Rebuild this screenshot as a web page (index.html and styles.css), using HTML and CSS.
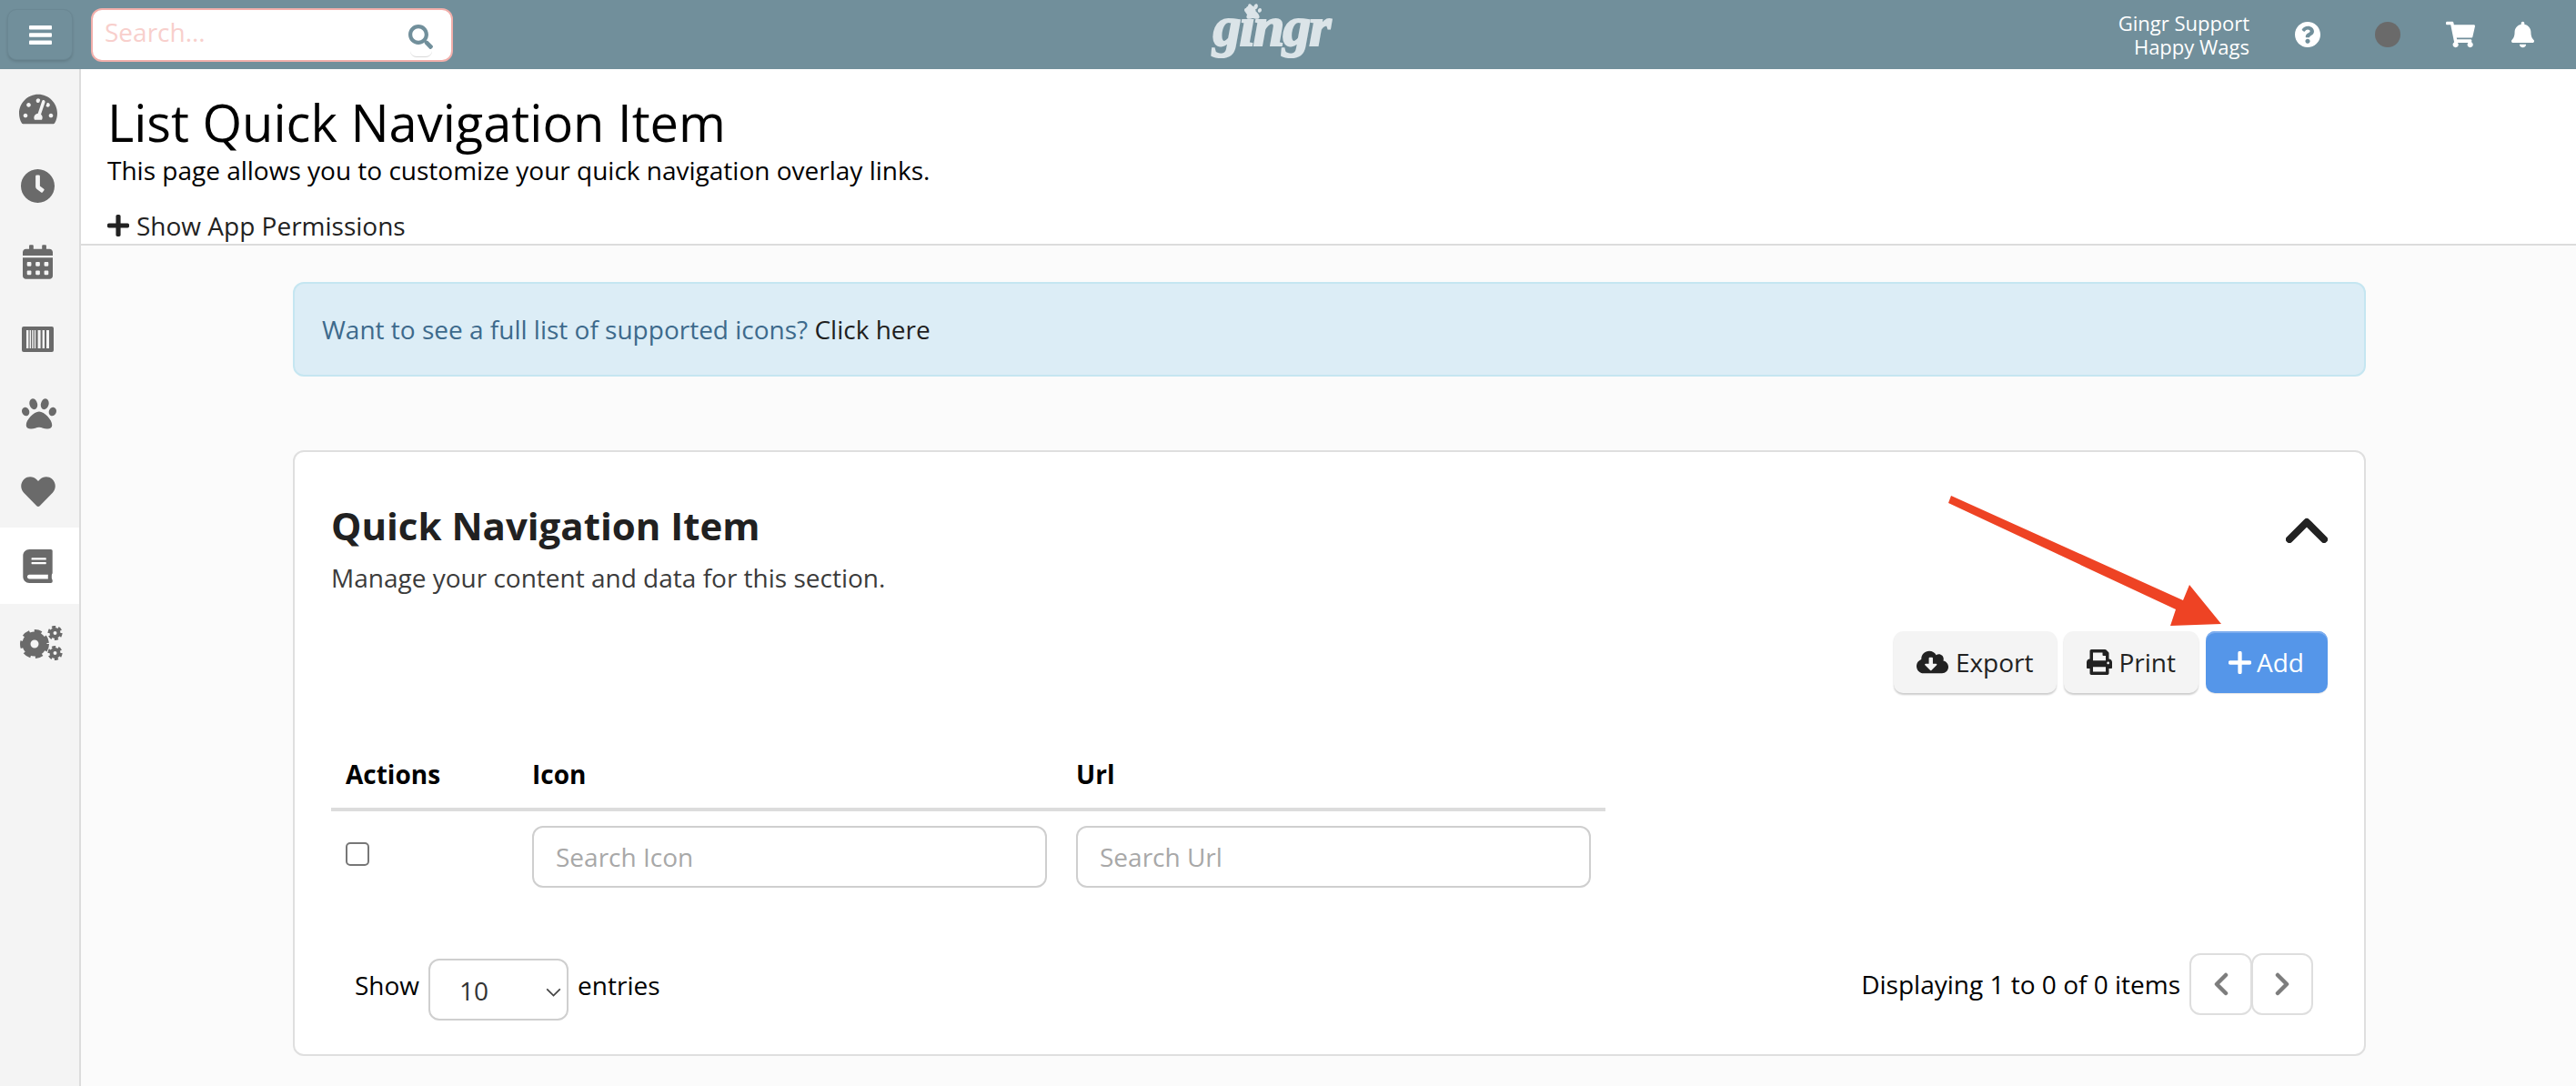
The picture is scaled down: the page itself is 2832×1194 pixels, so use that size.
FILE: index.html
```html
<!DOCTYPE html>
<html lang="en">
<head>
<meta charset="utf-8">
<title>List Quick Navigation Item</title>
<link rel="stylesheet" href="styles.css">
</head>
<body>
<header class="topbar">
  <div class="top-left">
    <button class="menu-btn" aria-label="Menu">
      <svg class="bars" viewBox="0 0 25 21"><rect width="25" height="4.4" rx="1"/><rect y="8.3" width="25" height="4.4" rx="1"/><rect y="16.6" width="25" height="4.4" rx="1"/></svg>
    </button>
    <div class="search">
      <input class="search-input" type="text" placeholder="Search...">
      <svg class="search-icon" viewBox="0 0 512 512"><path d="M505 442.7L405.3 343c-4.5-4.5-10.6-7-17-7H372c27.6-35.3 44-79.7 44-128C416 93.1 322.9 0 208 0S0 93.1 0 208s93.1 208 208 208c48.3 0 92.7-16.4 128-44v16.3c0 6.4 2.5 12.5 7 17l99.7 99.7c9.4 9.4 24.6 9.4 33.9 0l28.3-28.3c9.4-9.4 9.4-24.6.1-34zM208 336c-70.7 0-128-57.2-128-128 0-70.7 57.2-128 128-128 70.7 0 128 57.2 128 128 0 70.7-57.2 128-128 128z"/></svg>
    </div>
  </div>
  <div class="logo">
    <svg class="logo-paw" viewBox="0 0 512 512"><path d="M256 224c-79.41 0-192 122.76-192 200.25 0 34.9 26.81 55.75 71.74 55.75 48.84 0 81.09-25.08 120.26-25.08 39.51 0 71.85 25.08 120.26 25.08 44.93 0 71.74-20.85 71.74-55.75C448 346.76 335.41 224 256 224zm-147.28-12.61c-10.4-34.65-42.44-57.09-71.56-50.13-29.12 6.96-44.29 40.69-33.89 75.34 10.4 34.65 42.44 57.09 71.56 50.13 29.12-6.96 44.29-40.69 33.89-75.34zm84.72-20.78c30.94-8.14 46.42-49.94 34.58-93.36s-46.52-72.01-77.46-63.87-46.42 49.94-34.58 93.36c11.84 43.42 46.52 72.01 77.46 63.87zm281.39-29.34c-29.12-6.96-61.15 15.48-71.56 50.13-10.4 34.65 4.77 68.38 33.89 75.34 29.12 6.96 61.15-15.48 71.56-50.13 10.4-34.65-4.77-68.38-33.89-75.34zm-156.27 29.34c30.94 8.14 65.62-20.45 77.46-63.87 11.84-43.42-3.64-85.21-34.58-93.36s-65.62 20.45-77.46 63.87c-11.84 43.42 3.64 85.22 34.58 93.36z"/></svg>
    <span class="logo-text">gingr</span>
  </div>
  <div class="top-right">
    <div class="user"><div>Gingr Support</div><div>Happy Wags</div></div>
    <svg class="ti ti-help" viewBox="8 8 496 496"><path d="M504 256c0 136.997-111.043 248-248 248S8 392.997 8 256C8 119.083 119.043 8 256 8s248 111.083 248 248zM262.655 90c-54.497 0-89.255 22.957-116.549 63.758-3.536 5.286-2.353 12.415 2.715 16.258l34.699 26.31c5.205 3.947 12.621 3.008 16.665-2.122 17.864-22.658 30.113-35.797 57.303-35.797 20.429 0 45.698 13.148 45.698 32.958 0 14.976-12.363 22.667-32.534 33.976C247.128 238.528 216 254.941 216 296v4c0 6.627 5.373 12 12 12h56c6.627 0 12-5.373 12-12v-1.333c0-28.462 83.186-29.647 83.186-106.667 0-58.002-60.165-102-116.531-102zM256 338c-25.365 0-46 20.635-46 46 0 25.364 20.635 46 46 46s46-20.636 46-46c0-25.365-20.635-46-46-46z"/></svg>
    <span class="status-dot"></span>
    <svg class="ti ti-cart" viewBox="0 0 576 512"><path d="M528.12 301.319l47.273-208C578.806 78.301 567.391 64 551.99 64H159.208l-9.166-44.81C147.758 8.021 137.93 0 126.529 0H24C10.745 0 0 10.745 0 24v16c0 13.255 10.745 24 24 24h69.883l70.248 343.435C147.325 417.1 136 435.222 136 456c0 30.928 25.072 56 56 56s56-25.072 56-56c0-15.674-6.447-29.835-16.824-40h209.647C430.447 426.165 424 440.326 424 456c0 30.928 25.072 56 56 56s56-25.072 56-56c0-22.172-12.888-41.332-31.579-50.405l5.517-24.276c3.413-15.018-8.002-29.319-23.403-29.319H218.117l-6.545-32h293.145c11.206 0 20.92-7.754 23.403-18.681z"/></svg>
    <svg class="ti ti-bell" viewBox="0 0 448 512"><path d="M224 512c35.32 0 63.97-28.65 63.97-64H160.03c0 35.35 28.65 64 63.97 64zm215.39-149.71c-19.32-20.76-55.47-51.99-55.47-154.29 0-77.7-54.48-139.9-127.94-155.16V32c0-17.67-14.32-32-31.98-32s-31.98 14.33-31.98 32v20.84C118.56 68.1 64.08 130.3 64.08 208c0 102.3-36.15 133.53-55.47 154.29-6 6.45-8.66 14.16-8.61 21.71.11 16.4 12.98 32 32.1 32h383.8c19.12 0 32-15.6 32.1-32 .05-7.55-2.61-15.26-8.61-21.71z"/></svg>
  </div>
</header>
<div class="shell">
  <nav class="sidebar">
    <a class="nav-item"><svg class="ni ni-gauge" viewBox="0 32 576 448"><path d="M288 32C128.94 32 0 160.94 0 320c0 52.8 14.25 102.26 39.06 144.8 5.61 9.62 16.3 15.2 27.44 15.2h443c11.14 0 21.83-5.58 27.44-15.2C561.75 422.26 576 372.8 576 320c0-159.06-128.94-288-288-288zm0 64c14.71 0 26.58 10.13 30.32 23.65-1.11 2.26-2.64 4.23-3.45 6.67l-9.22 27.67c-5.13 3.49-10.97 6.01-17.64 6.01-17.67 0-32-14.33-32-32S270.33 96 288 96zM96 384c-17.67 0-32-14.33-32-32s14.33-32 32-32 32 14.33 32 32-14.33 32-32 32zm48-160c-17.67 0-32-14.33-32-32s14.33-32 32-32 32 14.33 32 32-14.33 32-32 32zm246.77-72.41l-61.33 184C343.13 347.33 352 364.54 352 384c0 11.72-3.38 22.55-8.88 32H232.88c-5.5-9.45-8.88-20.28-8.88-32 0-33.94 26.5-61.43 59.9-63.59l61.34-184.01c4.17-12.56 17.73-19.45 30.36-15.17 12.57 4.19 19.35 17.79 15.17 30.36zm14.66 57.2l15.52-46.55c3.47-1.29 7.13-2.23 11.05-2.23 17.67 0 32 14.33 32 32s-14.33 32-32 32c-11.38-.01-20.89-6.28-26.57-15.22zM480 384c-17.67 0-32-14.33-32-32s14.33-32 32-32 32 14.33 32 32-14.33 32-32 32z"/></svg></a>
    <a class="nav-item"><svg class="ni ni-clock" viewBox="8 8 496 496"><path d="M256,8C119,8,8,119,8,256S119,504,256,504,504,393,504,256,393,8,256,8Zm92.49,313h0l-20,25a16,16,0,0,1-22.49,2.5h0l-67-49.72a40,40,0,0,1-15-31.23V112a16,16,0,0,1,16-16h32a16,16,0,0,1,16,16V256l58,42.5A16,16,0,0,1,348.49,321Z"/></svg></a>
    <a class="nav-item"><svg class="ni ni-cal" viewBox="0 0 448 512"><path d="M0 464c0 26.5 21.5 48 48 48h352c26.5 0 48-21.5 48-48V192H0v272zm320-196c0-6.6 5.4-12 12-12h40c6.6 0 12 5.4 12 12v40c0 6.6-5.4 12-12 12h-40c-6.6 0-12-5.4-12-12v-40zm0 128c0-6.6 5.4-12 12-12h40c6.6 0 12 5.4 12 12v40c0 6.6-5.4 12-12 12h-40c-6.6 0-12-5.4-12-12v-40zM192 268c0-6.6 5.4-12 12-12h40c6.6 0 12 5.4 12 12v40c0 6.6-5.4 12-12 12h-40c-6.6 0-12-5.4-12-12v-40zm0 128c0-6.6 5.4-12 12-12h40c6.6 0 12 5.4 12 12v40c0 6.6-5.4 12-12 12h-40c-6.6 0-12-5.4-12-12v-40zM64 268c0-6.6 5.4-12 12-12h40c6.6 0 12 5.4 12 12v40c0 6.6-5.4 12-12 12H76c-6.6 0-12-5.4-12-12v-40zm0 128c0-6.6 5.4-12 12-12h40c6.6 0 12 5.4 12 12v40c0 6.6-5.4 12-12 12H76c-6.6 0-12-5.4-12-12v-40zM400 64h-48V16c0-8.8-7.2-16-16-16h-32c-8.8 0-16 7.2-16 16v48H160V16c0-8.8-7.2-16-16-16h-32c-8.8 0-16 7.2-16 16v48H48C21.5 64 0 85.5 0 112v48h448v-48c0-26.5-21.5-48-48-48z"/></svg></a>
    <a class="nav-item"><svg class="ni ni-barcode" viewBox="0 0 35 28"><rect width="35" height="28" rx="2"/><g class="gap-fill"><rect x="5" y="4" width="2.4" height="20"/><rect x="8.6" y="4" width="1.4" height="20"/><rect x="11.2" y="4" width="1.4" height="20"/><rect x="13.8" y="4" width="1.4" height="20"/><rect x="17.6" y="4" width="3" height="20"/><rect x="22.6" y="4" width="2.4" height="20"/><rect x="27" y="4" width="3" height="20"/></g></svg></a>
    <a class="nav-item"><svg class="ni ni-paw" viewBox="0 32 512 450"><path d="M256 224c-79.41 0-192 122.76-192 200.25 0 34.9 26.81 55.75 71.74 55.75 48.84 0 81.09-25.08 120.26-25.08 39.51 0 71.85 25.08 120.26 25.08 44.93 0 71.74-20.85 71.74-55.75C448 346.76 335.41 224 256 224zm-147.28-12.61c-10.4-34.65-42.44-57.09-71.56-50.13-29.12 6.96-44.29 40.69-33.89 75.34 10.4 34.65 42.44 57.09 71.56 50.13 29.12-6.96 44.29-40.69 33.89-75.34zm84.72-20.78c30.94-8.14 46.42-49.94 34.58-93.36s-46.52-72.01-77.46-63.87-46.42 49.94-34.58 93.36c11.84 43.42 46.52 72.01 77.46 63.87zm281.39-29.34c-29.12-6.96-61.15 15.48-71.56 50.13-10.4 34.65 4.77 68.38 33.89 75.34 29.12 6.96 61.15-15.48 71.56-50.13 10.4-34.65-4.77-68.38-33.89-75.34zm-156.27 29.34c30.94 8.14 65.62-20.45 77.46-63.87 11.84-43.42-3.64-85.21-34.58-93.36s-65.62 20.45-77.46 63.87c-11.84 43.42 3.64 85.22 34.58 93.36z"/></svg></a>
    <a class="nav-item"><svg class="ni ni-heart" viewBox="0 30 512 450"><path d="M462.3 62.6C407.5 15.9 326 24.3 275.7 76.2L256 96.5l-19.7-20.3C186.1 24.3 104.5 15.9 49.7 62.6c-62.8 53.6-66.1 149.8-9.9 207.9l193.5 199.8c12.5 12.9 32.8 12.9 45.3 0l193.5-199.8c56.3-58.1 53-154.3-9.8-207.9z"/></svg></a>
    <a class="nav-item active"><svg class="ni ni-book" viewBox="0 0 448 512"><path d="M448 360V24c0-13.3-10.7-24-24-24H96C43 0 0 43 0 96v320c0 53 43 96 96 96h328c13.3 0 24-10.7 24-24v-16c0-7.5-3.5-14.3-8.9-18.7-4.2-15.4-4.2-59.3 0-74.7 5.4-4.3 8.9-11.1 8.9-18.6zM128 134c0-3.3 2.7-6 6-6h212c3.3 0 6 2.7 6 6v20c0 3.3-2.7 6-6 6H134c-3.3 0-6-2.7-6-6v-20zm0 64c0-3.3 2.7-6 6-6h212c3.3 0 6 2.7 6 6v20c0 3.3-2.7 6-6 6H134c-3.3 0-6-2.7-6-6v-20zm253.4 250H96c-17.7 0-32-14.3-32-32 0-17.6 14.4-32 32-32h285.4c-1.9 17.1-1.9 46.9 0 64z"/></svg></a>
    <a class="nav-item"><svg class="ni ni-cogs" viewBox="0 0 47 38">
      <circle class="gear-teeth" cx="16" cy="20" r="13.5"/><circle class="gear-ring" cx="16" cy="20" r="9"/>
      <circle class="gear-teeth-s" cx="38.5" cy="8" r="6.6"/><circle class="gear-ring-s" cx="38.5" cy="8" r="4"/>
      <circle class="gear-teeth-s" cx="38.5" cy="30" r="6.6"/><circle class="gear-ring-s" cx="38.5" cy="30" r="4"/>
    </svg></a>
  </nav>
  <main class="main">
    <section class="page-head">
      <h1 class="page-title">List Quick Navigation Item</h1>
      <p class="page-sub">This page allows you to customize your quick navigation overlay links.</p>
      <a class="perm-link"><svg class="perm-plus" viewBox="0 32 448 448"><path d="M416 208H272V64c0-17.67-14.33-32-32-32h-32c-17.67 0-32 14.33-32 32v144H32c-17.67 0-32 14.33-32 32v32c0 17.67 14.33 32 32 32h144v144c0 17.67 14.33 32 32 32h32c17.67 0 32-14.33 32-32V304h144c17.67 0 32-14.33 32-32v-32c0-17.67-14.33-32-32-32z"/></svg>Show App Permissions</a>
    </section>
    <section class="content">
      <div class="alert">Want to see a full list of supported icons? <a class="alert-link">Click here</a></div>
      <div class="card">
        <div class="card-head">
          <div>
            <h2 class="card-title">Quick Navigation Item</h2>
            <p class="card-sub">Manage your content and data for this section.</p>
          </div>
          <svg class="chevron" viewBox="0 0 46 28"><polyline points="4,24 23,5 42,24"/></svg>
        </div>
        <div class="toolbar">
          <button class="btn"><svg class="btn-ico ico-cloud" viewBox="0 32 640 448"><path d="M537.6 226.6c4.1-10.7 6.4-22.4 6.4-34.6 0-53-43-96-96-96-19.7 0-38.1 6-53.3 16.2C367 64.2 315.3 32 256 32c-88.4 0-160 71.6-160 160 0 2.7.1 5.4.2 8.1C40.2 219.8 0 273.2 0 336c0 79.5 64.5 144 144 144h368c70.7 0 128-57.3 128-128 0-61.9-44-113.6-102.4-125.4zm-132.9 88.7L299.3 420.7c-6.2 6.2-16.4 6.2-22.6 0L171.3 315.3c-10.1-10.1-2.9-27.3 11.3-27.3H248V176c0-8.8 7.2-16 16-16h48c8.8 0 16 7.2 16 16v112h65.4c14.2 0 21.4 17.2 11.3 27.3z"/></svg>Export</button>
          <button class="btn"><svg class="btn-ico ico-print" viewBox="0 0 512 512"><path d="M448 192V77.25c0-8.49-3.37-16.62-9.37-22.63L393.37 9.37c-6-6-14.14-9.37-22.63-9.37H96C78.33 0 64 14.33 64 32v160c-35.35 0-64 28.65-64 64v112c0 8.84 7.16 16 16 16h48v96c0 17.67 14.33 32 32 32h320c17.67 0 32-14.33 32-32v-96h48c8.84 0 16-7.16 16-16V256c0-35.35-28.65-64-64-64zm-64 256H128v-96h256v96zm0-224H128V64h192v48c0 8.84 7.16 16 16 16h48v96zm48 72c-13.25 0-24-10.75-24-24 0-13.26 10.75-24 24-24s24 10.74 24 24c0 13.25-10.75 24-24 24z"/></svg>Print</button>
          <button class="btn btn-primary"><svg class="btn-ico ico-plus" viewBox="0 0 26 26"><path d="M13 2v22M2 13h22"/></svg>Add</button>
        </div>
        <table class="table">
          <colgroup><col class="col-a"><col class="col-b"><col class="col-b"></colgroup>
          <thead><tr><th>Actions</th><th>Icon</th><th>Url</th></tr></thead>
          <tbody><tr>
            <td class="check-cell"><span class="check"></span></td>
            <td><input class="field" type="text" placeholder="Search Icon"></td>
            <td><input class="field" type="text" placeholder="Search Url"></td>
          </tr></tbody>
        </table>
        <div class="table-foot">
          <div class="entries">
            <span class="entry-label">Show</span>
            <span class="select-wrap">
              <select class="select"><option>10</option><option>25</option><option>50</option></select>
              <svg class="select-caret" viewBox="0 0 14 8"><polyline points="1,1 7,7 13,1"/></svg>
            </span>
            <span class="entry-label">entries</span>
          </div>
          <div class="pager">
            <span>Displaying 1 to 0 of 0 items</span>
            <div class="pager-btns">
              <button class="page-btn" aria-label="Previous"><svg viewBox="0 0 16 26"><polyline points="13,3 3,13 13,23"/></svg></button>
              <button class="page-btn next" aria-label="Next"><svg viewBox="0 0 16 26"><polyline points="3,3 13,13 3,23"/></svg></button>
            </div>
          </div>
        </div>
        <svg class="arrow" viewBox="0 0 310 150"><polygon points="3,4 258,119 265,102 300,145 244,147 250,129 0,12"/></svg>
      </div>
    </section>
  </main>
</div>
</body>
</html>
```

FILE: styles.css
```css
* { box-sizing: border-box; }
html, body { margin: 0; padding: 0; height: 100%; overflow: hidden; }
body { font-family: "Open Sans", "Noto Sans", sans-serif; font-size: 28px; color: #000; background: #fff; }
button, input, select { font-family: inherit; }

.topbar { height: 76px; background: #718f9b; display: grid; grid-template-columns: 1fr auto 1fr; align-items: center; }
.top-left { display: flex; align-items: center; gap: 20px; padding-left: 8px; }
.menu-btn { width: 72px; height: 56px; background: #718f9b; border: 1px solid #6a8793; border-radius: 10px; box-shadow: 0 2px 3px rgba(0,0,0,.12); display: flex; align-items: center; justify-content: center; padding: 0; }
.bars { width: 25px; height: 21px; fill: #fff; }
.search { position: relative; width: 398px; height: 59px; background: #fff; border: 2px solid #f1aeaa; border-radius: 12px; display: flex; align-items: center; padding: 0 0 0 13px; }
.search::after { content: ""; position: absolute; right: 21px; bottom: 3px; width: 24px; height: 6px; border-bottom: 1px solid #d8d8d8; border-radius: 0 0 12px 12px; }
.search-input { flex: 1; min-width: 0; border: 0; outline: 0; padding: 0 0 6px; height: 50px; font-size: 28px; background: transparent; }
.search-input::placeholder { color: #f8cfcc; opacity: 1; }
.search-icon { width: 27px; height: 27px; fill: #718f9b; margin: 4px 20px 0 0; }
.logo { position: relative; margin-right: 38px; width: 133px; height: 76px; color: #dbe4e8; }
.logo-text { position: absolute; left: 3px; top: 0; font-family: "Liberation Serif", serif; font-weight: 700; font-style: italic; font-size: 62px; line-height: 58px; -webkit-text-stroke: 2px #dbe4e8; letter-spacing: -2px; }
.logo-paw { position: absolute; left: 37px; top: 3px; width: 19px; height: 19px; fill: #dbe4e8; }
.top-right { display: flex; align-items: center; justify-content: flex-end; height: 76px; padding-right: 46px; color: #fff; }
.user { font-size: 22px; line-height: 26px; text-align: right; margin-right: 50px; }
.ti { fill: #fff; display: block; }
.ti-help { width: 28px; height: 28px; }
.status-dot { width: 28px; height: 28px; border-radius: 50%; background: #6a6a6a; margin-left: 60px; }
.ti-cart { width: 32px; height: 30px; margin-left: 50px; }
.ti-bell { width: 25px; height: 30px; margin-left: 40px; }

.shell { display: flex; height: 1118px; }
.sidebar { width: 89px; flex: none; background: #f4f4f4; border-right: 2px solid #dcdcdc; }
.nav-item { display: flex; height: 84px; align-items: center; justify-content: center; padding: 4px 4px 0 0; }
.nav-item.active { background: #fff; padding-top: 0; }
.ni { fill: #6a6a6a; display: block; }
.ni-gauge { width: 42px; height: 34px; margin-top: -1px; }
.ni-clock { width: 37px; height: 37px; }
.ni-cal { width: 33px; height: 38px; margin-top: -1px; }
.ni-barcode { width: 35px; height: 28px; margin-top: 1px; }
.ni-paw { width: 38px; height: 34px; margin: -2px 0 0 3px; }
.ni-heart { width: 38px; height: 33px; }
.ni-book { width: 33px; height: 37px; }
.ni-cogs { width: 47px; height: 38px; margin: -2px 0 0 8px; }
.gap-fill rect { fill: #f4f4f4; }
.gear-teeth { fill: none; stroke: #6a6a6a; stroke-width: 5; stroke-dasharray: 7.6 5; }
.gear-ring { fill: none; stroke: #6a6a6a; stroke-width: 9; }
.gear-teeth-s { fill: none; stroke: #6a6a6a; stroke-width: 3; stroke-dasharray: 4 2.9; }
.gear-ring-s { fill: none; stroke: #6a6a6a; stroke-width: 4; }

.main { flex: 1; min-width: 0; background: #fbfbfb; }
.page-head { height: 194px; background: #fff; border-bottom: 2px solid #dcdcdc; padding: 24px 0 0 29px; }
.page-title { margin: 0; font-size: 56px; font-weight: 400; line-height: 68px; }
.page-sub { margin: 0; line-height: 38px; }
.perm-link { display: flex; align-items: center; margin-top: 23px; line-height: 38px; color: #222; }
.perm-plus { width: 24px; height: 24px; fill: #222; margin-right: 8px; }

.content { padding: 40px 231px 0 233px; }
.alert { height: 104px; background: #dcedf6; border: 2px solid #c5e6f1; border-radius: 12px; padding: 0 30px; display: flex; align-items: center; white-space: pre; color: #3d6a8c; }
.alert-link { color: #1f1f1f; }
.card { position: relative; margin-top: 81px; height: 666px; background: #fff; border: 2px solid #dfdfdf; border-radius: 12px; padding: 0 40px; }
.card-head { display: flex; justify-content: space-between; align-items: flex-start; padding-top: 50px; }
.card-title { margin: 0; font-size: 42px; line-height: 62px; font-weight: 700; color: #212121; }
.card-sub { margin: 7px 0 0; line-height: 38px; color: #3b3b3b; }
.chevron { width: 46px; height: 28px; margin-top: 22px; fill: none; stroke: #222; stroke-width: 8; stroke-linecap: round; stroke-linejoin: round; }
.toolbar { display: flex; justify-content: flex-end; gap: 8px; margin-top: 40px; }
.btn { height: 68px; border: 0; border-radius: 10px; background: #f4f4f4; box-shadow: 0 2px 2px rgba(0,0,0,.2); color: #222; font-size: 28px; display: flex; align-items: center; padding: 0 25px; }
.btn-ico { display: block; fill: #222; margin-right: 8px; }
.ico-cloud { width: 35px; height: 26px; }
.ico-print { width: 28px; height: 30px; }
.btn-primary { background: #5596e9; color: #fff; padding: 0 26px 0 25px; box-shadow: inset 0 2px 0 #7dadee, 0 1px 1px rgba(0,0,0,.1); }
.ico-plus { width: 25px; height: 25px; fill: none; stroke: #fff; stroke-width: 4.5; stroke-linecap: round; margin-right: 6px; }

.table { width: 1401px; border-collapse: collapse; table-layout: fixed; margin-top: 52px; }
.col-a { width: 205px; }
.col-b { width: 598px; }
.table th { text-align: left; font-weight: 700; padding: 0 16px; height: 76px; border-bottom: 4px solid #dcdcdc; color: #000; }
.table td { padding: 16px 16px 0; vertical-align: top; }
.check { display: block; width: 26px; height: 26px; margin-top: 18px; border: 2px solid #777; border-radius: 5px; background: #fff; }
.field { display: block; width: 566px; height: 68px; border: 2px solid #cfcfcf; border-radius: 12px; padding: 0 24px; font-size: 28px; background: #fff; outline: 0; }
.field::placeholder { color: #a8a8a8; opacity: 1; }

.table-foot { display: flex; justify-content: space-between; align-items: flex-start; margin-top: 72px; padding: 0 16px 0 26px; }
.entries { display: flex; align-items: center; height: 68px; margin-top: 6px; }
.entry-label { margin-bottom: 10px; }
.select-wrap { position: relative; display: block; margin: 0 10px; width: 154px; height: 68px; }
.select { display: block; width: 154px; height: 68px; appearance: none; -webkit-appearance: none; border: 2px solid #cfcfcf; border-radius: 12px; background: #fff; padding: 2px 0 0 32px; font-size: 28px; color: #333; outline: 0; }
.select-caret { position: absolute; right: 8px; top: 32px; width: 17px; height: 10px; fill: none; stroke: #444; stroke-width: 1.4; pointer-events: none; }
.pager { display: flex; align-items: center; height: 68px; }
.pager-btns { display: flex; margin-left: 10px; }
.page-btn { width: 69px; height: 68px; background: #fff; border: 2px solid #dedede; border-radius: 12px; padding: 0; display: flex; align-items: center; justify-content: center; }
.page-btn.next { width: 68px; margin-left: -1px; }
.page-btn svg { width: 16px; height: 26px; fill: none; stroke: #7d7d7d; stroke-width: 4.5; stroke-linecap: round; stroke-linejoin: round; }
.arrow { position: absolute; left: 1818px; top: 44px; width: 310px; height: 150px; fill: #ee4324; }
```
